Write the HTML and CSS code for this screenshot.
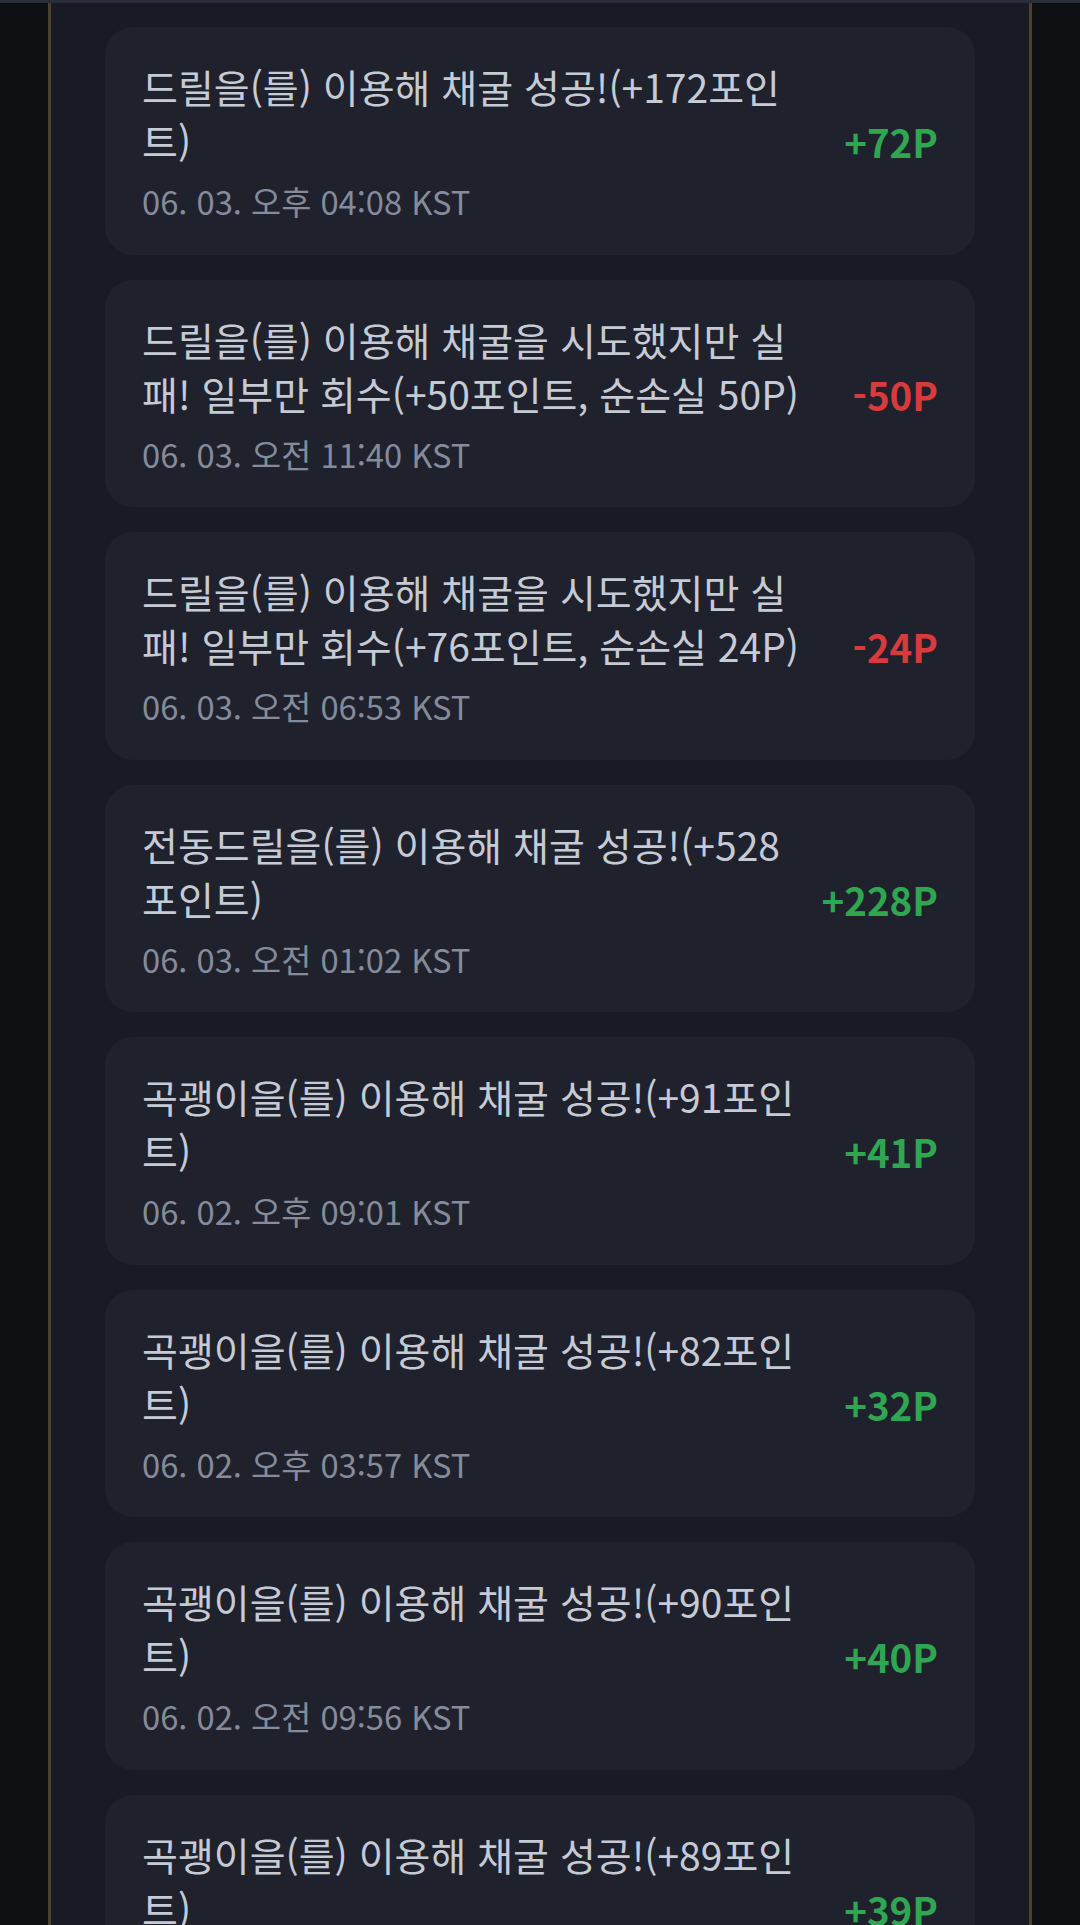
FILE: index.html
```html
<!DOCTYPE html>
<html lang="ko">
<head>
<meta charset="utf-8">
<title>포인트 내역</title>
<link rel="stylesheet" href="styles.css">
</head>
<body>
<div class="topbar"></div>
<main class="panel">
  <ul class="list">
    <li class="item">
      <div class="info">
        <p class="desc">드릴을(를) 이용해 채굴 성공!(+172포인트)</p>
        <p class="time">06. 03. 오후 04:08 KST</p>
      </div>
      <span class="amount plus">+72P</span>
    </li>
    <li class="item">
      <div class="info">
        <p class="desc">드릴을(를) 이용해 채굴을 시도했지만 실패! 일부만 회수(+50포인트, 순손실 50P)</p>
        <p class="time">06. 03. 오전 11:40 KST</p>
      </div>
      <span class="amount minus">-50P</span>
    </li>
    <li class="item">
      <div class="info">
        <p class="desc">드릴을(를) 이용해 채굴을 시도했지만 실패! 일부만 회수(+76포인트, 순손실 24P)</p>
        <p class="time">06. 03. 오전 06:53 KST</p>
      </div>
      <span class="amount minus">-24P</span>
    </li>
    <li class="item">
      <div class="info">
        <p class="desc">전동드릴을(를) 이용해 채굴 성공!(+528포인트)</p>
        <p class="time">06. 03. 오전 01:02 KST</p>
      </div>
      <span class="amount plus">+228P</span>
    </li>
    <li class="item">
      <div class="info">
        <p class="desc">곡괭이을(를) 이용해 채굴 성공!(+91포인트)</p>
        <p class="time">06. 02. 오후 09:01 KST</p>
      </div>
      <span class="amount plus">+41P</span>
    </li>
    <li class="item">
      <div class="info">
        <p class="desc">곡괭이을(를) 이용해 채굴 성공!(+82포인트)</p>
        <p class="time">06. 02. 오후 03:57 KST</p>
      </div>
      <span class="amount plus">+32P</span>
    </li>
    <li class="item">
      <div class="info">
        <p class="desc">곡괭이을(를) 이용해 채굴 성공!(+90포인트)</p>
        <p class="time">06. 02. 오전 09:56 KST</p>
      </div>
      <span class="amount plus">+40P</span>
    </li>
    <li class="item">
      <div class="info">
        <p class="desc">곡괭이을(를) 이용해 채굴 성공!(+89포인트)</p>
        <p class="time">06. 02. 오전 04:12 KST</p>
      </div>
      <span class="amount plus">+39P</span>
    </li>
  </ul>
</main>
</body>
</html>
```

FILE: styles.css
```css
html, body {
  margin: 0;
  padding: 0;
}
body {
  background: #0e0f12;
  font-family: "Noto Sans CJK KR", "Noto Sans", sans-serif;
  height: 1925px;
  overflow: hidden;
}
.topbar {
  height: 3px;
  background: #272d39;
}
.panel {
  margin: 0 48px;
  background: #181b24;
  border-left: 3px solid #4a4131;
  border-right: 3px solid #4a4131;
  padding: 24px 54px;
  min-height: 1922px;
  box-sizing: border-box;
}
.list {
  list-style: none;
  margin: 0;
  padding: 0;
  display: flex;
  flex-direction: column;
  gap: 25px;
}
.item {
  background: #1f222d;
  border-radius: 28px;
  padding: 32px 37px 30.5px 37px;
  display: flex;
  align-items: center;
  gap: 38px;
}
.info {
  flex: 1;
  min-width: 0;
}
.desc {
  margin: 0;
  font-size: 39px;
  line-height: 54px;
  color: #c6cad4;
}
.time {
  margin: 11px 0 0 0;
  font-size: 32.7px;
  line-height: 46px;
  color: #858b9a;
}
.amount {
  flex-shrink: 0;
  font-size: 38.5px;
  font-weight: 700;
  line-height: 1;
}
.plus {
  color: #2fa651;
}
.minus {
  color: #d93a3c;
}
```
